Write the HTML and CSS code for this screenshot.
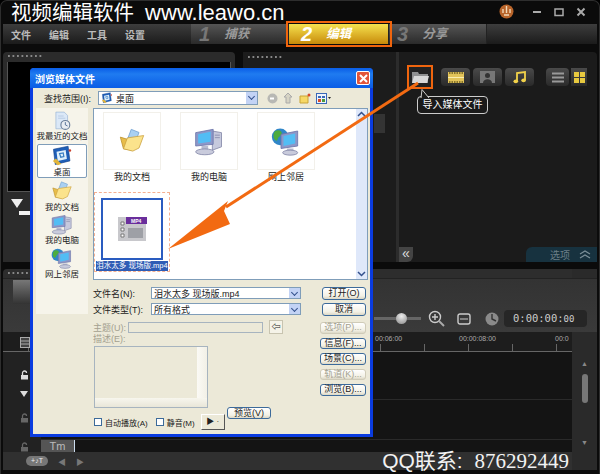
FILE: index.html
```html
<!DOCTYPE html>
<html lang="zh-CN">
<head>
  <meta charset="UTF-8" />
  <title>视频编辑软件</title>
  <link rel="stylesheet" href="styles.css">
</head>
<body>
  <svg class="defs" width="0" height="0">
    <symbol id="i-folder" viewBox="0 0 36 36">
      <path d="M17 3l10 4-6 16-10-4z" fill="#a9d0f2" stroke="#6f9fd0"/>
      <path d="M3 13l13 4 3 13-12-2z" fill="#e8bd4a" stroke="#b98f2a"/>
      <path d="M7 28l5-14 21-3-6 16-8 4z" fill="#fbe38c" stroke="#caa03c"/>
    </symbol>
    <symbol id="i-pc" viewBox="0 0 36 36">
      <path d="M22 6l11 2v17l-11 4z" fill="#c6c9dd" stroke="#8488a8"/>
      <path d="M25 11h6M25 14h6" stroke="#8488a8"/>
      <path d="M2 8l21-4v18L2 24z" fill="#8d97c8" stroke="#6b74a8"/>
      <path d="M5 10l15-3v12L5 21z" fill="#52bdf4"/>
      <path d="M9 24h8v5H9z" fill="#b8bbd0"/>
      <ellipse cx="13" cy="31" rx="11" ry="3.5" fill="#c9cbdc" stroke="#8488a8"/>
    </symbol>
    <symbol id="i-net" viewBox="0 0 36 36">
      <circle cx="11" cy="13" r="10" fill="#2f86c8"/>
      <path d="M5 6c5-2 8 0 8 3s-4 3-5 7-5 0-5-3 0-5 2-7z" fill="#4dac3e"/>
      <path d="M12 10l20-4v18l-20 3z" fill="#8d97c8" stroke="#6b74a8"/>
      <path d="M15 12l14-3v12l-14 3z" fill="#52bdf4"/>
      <path d="M19 27h8v4h-8z" fill="#b8bbd0"/>
      <ellipse cx="23" cy="32" rx="9" ry="3" fill="#c9cbdc" stroke="#8488a8"/>
    </symbol>
    <symbol id="i-recent" viewBox="0 0 36 36">
      <path d="M7 2h15l6 6v24H7z" fill="#dbe8f7" stroke="#8aa9cf"/>
      <path d="M11 9h10M11 13h13" stroke="#9db7d8"/>
      <circle cx="24" cy="25" r="8" fill="#e9edf2" stroke="#6b7f99" stroke-width="2"/>
      <path d="M24 20v5l4 2" fill="none" stroke="#3f5f8a" stroke-width="1.5"/>
    </symbol>
    <symbol id="i-desk" viewBox="0 0 36 36">
      <path d="M4 7l24-5 3 24-24 6z" fill="#1f5fb8" stroke="#123f85"/>
      <path d="M9 11l15-3 2 15-15 3z" fill="#dff0fb"/>
      <path d="M14 14l6-1 1 6-5 1z" fill="none" stroke="#3a7fc4" stroke-width="2"/>
      <path d="M3 26l8 7 6-2-9-9z" fill="#e2b53a"/>
      <circle cx="31" cy="9" r="2" fill="#c8402c"/>
    </symbol>
    <symbol id="i-lock" viewBox="0 0 10 10">
      <path d="M2.500 5V3a2 2 0 0 1 4 0" fill="none" stroke="currentColor" stroke-width="1.3"/>
      <rect x="1" y="5" width="7" height="4.500" fill="currentColor"/>
    </symbol>
  </svg>

  <div class="app">
    <header class="title-bar">
      <div class="site-title"><span class="cn">视频编辑软件</span> www.leawo.cn</div>
      <div class="win-btns">
        <svg class="win-logo" width="15" height="15" viewBox="0 0 15 15"><circle cx="7.500" cy="7.500" r="7" fill="#b8642a"/><path d="M7.500 2v7M4 5v4M11 5v4M5 11h5" stroke="#f3d9b8" stroke-width="1.400"/></svg>
        <svg width="10" height="10" viewBox="0 0 10 10"><path d="M1 5h8" stroke="#aaa" stroke-width="2"/></svg>
        <svg width="10" height="10" viewBox="0 0 10 10"><rect x="1" y="2" width="8" height="6.500" fill="none" stroke="#aaa" stroke-width="1.500"/></svg>
        <svg width="10" height="10" viewBox="0 0 10 10"><path d="M1.500 1.500l7 7M8.500 1.500l-7 7" stroke="#aaa" stroke-width="2"/></svg>
      </div>
    </header>

    <nav class="nav">
      <div class="menu">
        <span>文件</span><span>编辑</span><span>工具</span><span>设置</span>
      </div>
      <div class="tab"><b>1</b><span>捕获</span></div>
      <div class="tab tab-on"><b>2</b><span>编辑</span></div>
      <div class="tab"><b>3</b><span>分享</span></div>
      <div class="nav-rest"></div>
    </nav>

    <section class="panels">
      <div class="panel panel-left">
        <div class="dots"></div>
        <div class="screen"></div>
        <div class="scrub">
          <div class="scrub-thumb"></div>
          <div class="scrub-bar"></div>
        </div>
      </div>
      <div class="panel panel-right">
        <div class="media-left">
          <div class="dots"></div>
          <div class="media-strip"></div>
        </div>
        <div class="library">
          <div class="lib-tools">
            <div class="folder-box">
              <svg width="18" height="16" viewBox="0 0 18 16"><path d="M1 3h6l1 2h9v9H1z" fill="#8f9091"/><path d="M1 14l2-7h15l-2 7z" fill="#d8d8d8"/></svg>
            </div>
            <div class="lib-btn">
              <svg width="16" height="11" viewBox="0 0 16 11"><rect width="16" height="11" fill="#e3c45a"/><path d="M1 1h14M1 10h14" stroke="#6b5a1c" stroke-width="1.400" stroke-dasharray="1.500 1"/><path d="M0 5.500h16" stroke="#fbeeb0"/></svg>
            </div>
            <div class="lib-btn">
              <svg width="15" height="12" viewBox="0 0 15 12"><rect width="15" height="12" fill="#777"/><circle cx="7.500" cy="4.500" r="2.500" fill="#333"/><path d="M3 12c0-5 9-5 9 0z" fill="#333"/></svg>
            </div>
            <div class="lib-btn">
              <svg width="13" height="13" viewBox="0 0 13 13"><path d="M4 10V2l8-1v8" fill="none" stroke="#f2d24a" stroke-width="1.800"/><ellipse cx="2.800" cy="10.300" rx="2.300" ry="1.900" fill="#f2d24a"/><ellipse cx="10.600" cy="9.300" rx="2.300" ry="1.900" fill="#f2d24a"/></svg>
            </div>
            <div class="lib-btn view-btn">
              <svg width="12" height="11" viewBox="0 0 12 11"><path d="M0 1.500h12M0 5.500h12M0 9.500h12" stroke="#999" stroke-width="2"/></svg>
            </div>
            <div class="lib-btn view-btn view-on">
              <svg width="11" height="11" viewBox="0 0 11 11"><path d="M0 0h5v5H0zM6 0h5v5H6zM0 6h5v5H0zM6 6h5v5H6z" fill="#e7c93f"/></svg>
            </div>
          </div>
          <div class="tooltip">
            <svg class="tip-tail" width="10" height="9" viewBox="0 0 10 9"><path d="M1 9L2 .5 9 9" fill="#1a1a1a" stroke="#ccc"/></svg>
            导入媒体文件
          </div>
          <div class="lib-foot">
            <div class="collapse">«</div>
            <div class="options">
              <span>选项</span>
              <svg width="12" height="9" viewBox="0 0 12 9"><path d="M1 4l5-3 5 3M1 8l5-3 5 3" fill="none" stroke="#7b8f98" stroke-width="1.300"/></svg>
            </div>
          </div>
        </div>
      </div>
    </section>

    <section class="timeline">
      <div class="tl-main">
        <div class="dots tl-dots"></div>
        <div class="tl-tools">
          <div class="tl-thumb"></div>
          <div class="tl-right">
            <div class="slider"><div class="knob"></div></div>
            <svg class="ic-zoom" width="18" height="18" viewBox="0 0 18 18"><circle cx="7" cy="7" r="5.500" fill="none" stroke="#ccc" stroke-width="1.400"/><path d="M4 7h6M7 4v6" stroke="#ccc" stroke-width="1.400"/><path d="M11 11l5 5" stroke="#aaa" stroke-width="2"/></svg>
            <svg class="ic-fit" width="14" height="12" viewBox="0 0 14 12"><rect x="1" y="1" width="12" height="10" rx="2" fill="none" stroke="#ccc" stroke-width="1.400"/><path d="M3 6h8" stroke="#ccc"/></svg>
            <svg class="ic-clock" width="14" height="14" viewBox="0 0 14 14"><circle cx="7" cy="7" r="6.500" fill="#8a8a8a"/><path d="M7 2v5l4 2" fill="none" stroke="#333" stroke-width="1.400"/></svg>
            <div class="timecode">0:00:00:<small>00</small></div>
          </div>
        </div>
        <div class="ruler">
          <svg class="ruler-icon" width="10" height="11" viewBox="0 0 10 11"><rect x=".5" y=".5" width="9" height="10" fill="#444" stroke="#aaa"/><path d="M1 4h8M1 7h8" stroke="#aaa"/></svg>
          <span class="tick-label">00:06:00</span>
          <span class="tick-label">00:00:08:00</span>
          <span class="tick-label tick-cut">00:0</span>
        </div>
        <div class="tracks">
          <div class="track-icons">
            <svg class="lock-on" width="10" height="10"><use href="#i-lock"/></svg>
            <svg width="8" height="6" viewBox="0 0 8 6" class="lock-on"><path d="M0 0h8L4 6z" fill="#ddd"/></svg>
            <svg width="10" height="10"><use href="#i-lock"/></svg>
            <svg width="10" height="10"><use href="#i-lock"/></svg>
          </div>
          <div class="track-rows">
            <div class="track-row"></div>
            <div class="track-row"></div>
            <div class="clip-row"><div class="clip">Tm</div></div>
          </div>
        </div>
        <div class="tl-foot">
          <div class="add-btn">+♪T</div>
          <span class="nav-tri">◀</span><span class="nav-tri">▶</span>
          <div class="qq">QQ联系: <span class="qq-num">876292449</span></div>
        </div>
      </div>
      <div class="tl-scroll">
        <span>▲</span>
        <div class="scroll-thumb"></div>
        <span class="scroll-down">▼</span>
      </div>
    </section>
  </div>

  <div class="dialog">
    <div class="dlg-title">
      <span>浏览媒体文件</span>
      <div class="dlg-close">
        <svg width="9" height="9" viewBox="0 0 9 9"><path d="M1 1l7 7M8 1L1 8" stroke="#fff" stroke-width="2"/></svg>
      </div>
    </div>
    <div class="dlg-body">
      <div class="look-row">
        <label class="look-label">查找范围(I):</label>
        <div class="combo look-combo">
          <svg width="12" height="12"><use href="#i-desk"/></svg>
          <span>桌面</span>
          <div class="combo-arrow"></div>
        </div>
        <div class="look-tools">
          <svg width="11" height="11" viewBox="0 0 11 11"><circle cx="5.500" cy="5.500" r="5" fill="#b8b8b4"/><path d="M7 5.500H3" stroke="#fff" stroke-width="2"/></svg>
          <svg width="11" height="12" viewBox="0 0 11 12"><path d="M5 1l4 4H7v6H3V5H1z" fill="#d6d3c4" stroke="#aaa"/></svg>
          <svg width="12" height="11" viewBox="0 0 12 11"><path d="M1 3h8v7H1z" fill="#f6d866" stroke="#c8a438"/><circle cx="10" cy="2" r="1.500" fill="#d84a2a"/></svg>
          <svg width="15" height="11" viewBox="0 0 15 11"><rect x=".5" y=".5" width="10" height="10" fill="#eef3fb" stroke="#3a68b8"/><path d="M2 3h3v2H2zM6 3h3v2H6z" fill="#3a68b8"/><path d="M2 6h3v3H2z" fill="#d84a2a"/><path d="M6 6h3v3H6z" fill="#4a9a3a"/><path d="M12 4h3l-1.500 2z" fill="#222"/></svg>
        </div>
      </div>
      <div class="dlg-columns">
        <aside class="places">
          <div class="place place-first"><svg width="20" height="20"><use href="#i-recent"/></svg><span>我最近的文档</span></div>
          <div class="place place-on"><svg width="22" height="22"><use href="#i-desk"/></svg><span>桌面</span></div>
          <div class="place"><svg width="22" height="22"><use href="#i-folder"/></svg><span>我的文档</span></div>
          <div class="place"><svg width="22" height="22"><use href="#i-pc"/></svg><span>我的电脑</span></div>
          <div class="place"><svg width="22" height="22"><use href="#i-net"/></svg><span>网上邻居</span></div>
        </aside>
        <div class="dlg-main">
          <div class="file-list">
            <div class="files">
              <div class="file-row">
                <div class="file"><div class="thumb"><svg width="28" height="28"><use href="#i-folder"/></svg></div><span>我的文档</span></div>
                <div class="file"><div class="thumb"><svg width="30" height="30"><use href="#i-pc"/></svg></div><span>我的电脑</span></div>
                <div class="file"><div class="thumb"><svg width="30" height="30"><use href="#i-net"/></svg></div><span>网上邻居</span></div>
              </div>
              <div class="file-picked">
                <div class="thumb thumb-on">
                  <svg width="30" height="30" viewBox="0 0 30 30">
                    <path d="M1 3h28v24H1z" fill="#c8c8cc"/>
                    <path d="M4 8h3v3H4zM4 14h3v3H4zM4 20h3v3H4z" fill="#fff" stroke="#777"/>
                    <rect x="11" y="14" width="15" height="10" fill="#9ea0a6"/>
                    <rect x="9" y="3" width="21" height="7" fill="#6a2f9c"/>
                    <text x="14" y="9" class="mp4-tag">MP4</text>
                  </svg>
                </div>
                <span class="picked-name">泪水太多 现场版.mp4</span>
              </div>
            </div>
            <div class="v-scroll">
              <svg width="11" height="11" viewBox="0 0 11 11"><path d="M2 7l3.500-3.500L9 7" fill="none" stroke="#33508c" stroke-width="1.500"/></svg>
              <svg width="11" height="11" viewBox="0 0 11 11"><path d="M2 4l3.500 3.500L9 4" fill="none" stroke="#33508c" stroke-width="1.500"/></svg>
            </div>
          </div>

          <div class="field-row first-field">
            <label>文件名(N):</label>
            <div class="combo field-combo"><span>泪水太多 现场版.mp4</span><div class="combo-arrow"></div></div>
            <button class="btn btn-wide">打开(O)</button>
          </div>
          <div class="field-row second-field">
            <label>文件类型(T):</label>
            <div class="combo field-combo"><span>所有格式</span><div class="combo-arrow"></div></div>
            <button class="btn btn-wide">取消</button>
          </div>

          <div class="extras">
            <div class="extras-left">
              <div class="subject-row">
                <label class="off">主题(U):</label>
                <div class="subject-input"></div>
                <div class="back-btn">⇦</div>
              </div>
              <label class="off desc-label">描述(E):</label>
              <div class="note-row">
                <div class="note-col">
                  <div class="note">
                    <div class="note-v"></div>
                    <div class="note-h"></div>
                  </div>
                  <div class="check-row">
                    <i class="check"></i><span>自动播放(A)</span>
                    <i class="check check-2"></i><span>静音(M)</span>
                    <div class="play-btn">▶ ·</div>
                  </div>
                </div>
                <button class="btn btn-preview">预览(V)</button>
              </div>
            </div>
            <div class="extras-right">
              <button class="btn btn-side off">选项(P)...</button>
              <button class="btn btn-side">信息(F)...</button>
              <button class="btn btn-side">场景(C)...</button>
              <button class="btn btn-side off">轨道(K)...</button>
              <button class="btn btn-side">浏览(B)...</button>
            </div>
          </div>
        </div>
      </div>
    </div>
  </div>

  <svg class="arrow" width="600" height="474" viewBox="0 0 600 474">
    <path d="M418 83L226 207" stroke="#f26a12" stroke-width="3" fill="none"/>
    <path d="M168 249L228 201 224 211 230 224z" fill="#f26a12"/>
  </svg>
</body>
</html>
```

FILE: styles.css
```css
* {
  box-sizing: border-box;
}
html, body {
  margin: 0;
  height: 474px;
  overflow: hidden;
}
body {
  position: relative;
  width: 600px;
  background: #000;
  font-family: "Liberation Sans", "Noto Sans CJK SC", sans-serif;
  font-size: 9px;
  color: #222;
}
.defs {
  position: absolute;
}
.app {
  height: 474px;
  padding: 0 2px;
  background: #0b0b0b;
  border: 1px solid #2e2e2e;
  border-bottom: 0;
  border-radius: 7px 7px 0 0;
}

/* title + window buttons */
.title-bar {
  height: 23px;
  display: flex;
  justify-content: space-between;
  align-items: center;
  padding: 0 11px 0 8px;
}
.site-title {
  font-size: 22px;
  line-height: 22px;
  color: #fff;
  white-space: nowrap;
}
.site-title .cn {
  font-size: 20.500px;
  line-height: 20px;
  font-weight: 400;
  margin-right: 5px;
}
.win-btns {
  display: flex;
  align-items: center;
  gap: 12px;
  margin-top: -2px;
}
.win-logo {
  margin-right: 6px;
}

/* menu + tabs */
.nav {
  height: 20px;
  display: flex;
}
.menu {
  width: 188px;
  display: flex;
  gap: 18px;
  align-items: center;
  padding-left: 8px;
  background: linear-gradient(#3d3d3d, #1b1b1b);
  color: #bbb;
  font-size: 10px;
  font-weight: 700;
}
.tab {
  width: 98px;
  display: flex;
  align-items: center;
  gap: 14px;
  padding-left: 8px;
  background: linear-gradient(#555, #2a2a2a);
  border-right: 1px solid #222;
  color: #999;
  font-size: 12.500px;
  line-height: 16px;
  font-style: italic;
  font-weight: 700;
}
.tab b {
  font-size: 20px;
  line-height: 18px;
  color: #777;
}
.tab-on {
  width: 100px;
  padding-left: 12px;
  background: linear-gradient(#f6e24f, #c78a0a);
  color: #fff;
  outline: 2px solid #f0650e;
  outline-offset: 1px;
  position: relative;
  z-index: 1;
}
.tab-on b {
  color: #fff;
}
.nav-rest {
  flex: 1;
  background: linear-gradient(#3d3d3d, #1b1b1b);
}

/* upper panels */
.panels {
  display: flex;
  gap: 8px;
  height: 210px;
  margin-top: 8px;
}
.panel {
  background: #2b2b2b;
  border-radius: 4px 4px 0 0;
}
.dots {
  height: 9px;
  margin-left: 5px;
  background: radial-gradient(circle at 1px 4px, #888 1px, transparent 1.200px) 0 0 / 4.500px 9px repeat-x;
  width: 36px;
}
.panel-left {
  width: 232px;
}
.screen {
  height: 130px;
  margin: 1px 4px 0;
  background: #000;
  border: 1px solid #555;
  border-top: 0;
}
.scrub {
  padding: 7px 0 0 8px;
}
.scrub-thumb {
  width: 0;
  height: 0;
  border: 6px solid transparent;
  border-top: 9px solid #eee;
  border-bottom: 0;
}
.scrub-bar {
  width: 40px;
  height: 4px;
  margin: 3px 0 0 8px;
  background: #f2f2f2;
}
.panel-right {
  flex: 1;
  display: flex;
  background: #1b1b1b;
}
.media-left {
  width: 156px;
  background: #1c1c1c;
  border-right: 3px solid #2c2c2c;
  padding-top: 1px;
}
.media-strip {
  width: 11px;
  height: 19px;
  margin: 52px 0 0 131px;
  background: #343434;
}
.library {
  flex: 1;
  position: relative;
  display: flex;
  flex-direction: column;
  justify-content: space-between;
}
.lib-tools {
  display: flex;
  align-items: center;
  gap: 3px;
  padding: 13px 0 0 8px;
}
.folder-box {
  width: 26px;
  height: 24px;
  margin-right: 5px;
  display: flex;
  align-items: center;
  justify-content: center;
  border: 2px solid #f0650e;
  background: #222;
}
.lib-btn {
  width: 29px;
  height: 18px;
  display: flex;
  align-items: center;
  justify-content: center;
  border-radius: 4px;
  background: linear-gradient(#4a4a4a, #2a2a2a);
}
.view-btn {
  width: 23px;
}
.view-btn:nth-child(5) {
  margin-left: 9px;
}
.view-on {
  width: 16px;
  margin-left: -1px;
  border-radius: 0;
}
.tooltip {
  position: absolute;
  left: 18px;
  top: 44px;
  width: 71px;
  height: 18px;
  border: 1px solid #ccc;
  border-radius: 4px;
  background: #1a1a1a;
  color: #fff;
  font-size: 10px;
  line-height: 16px;
  text-align: center;
}
.tip-tail {
  position: absolute;
  left: 2px;
  top: -8px;
}
.lib-foot {
  display: flex;
  justify-content: space-between;
  align-items: flex-end;
}
.collapse {
  width: 14px;
  height: 15px;
  background: #444;
  border-radius: 0 0 6px 0;
  color: #ddd;
  font-size: 14px;
  line-height: 13px;
  text-align: center;
}
.options {
  width: 71px;
  height: 15px;
  display: flex;
  align-items: center;
  justify-content: flex-end;
  gap: 9px;
  padding-right: 6px;
  background: #17323f;
  border-radius: 6px 0 0 0;
  color: #6c7f88;
  font-size: 10px;
}

/* timeline */
.timeline {
  display: flex;
  height: 201px;
  margin-top: 7px;
  background: #2d2d2d;
  border-radius: 4px 4px 0 0;
}
.tl-main {
  width: 569px;
  display: flex;
  flex-direction: column;
}
.tl-dots {
  flex: none;
}
.tl-tools {
  height: 54px;
  flex: none;
  display: flex;
  justify-content: space-between;
  background: linear-gradient(#333, #3a3a3a);
  border-top: 1px solid #222;
  margin-right: -25px;
  position: relative;
  z-index: 1;
}
.tl-thumb {
  width: 20px;
  height: 24px;
  margin: 1px 0 0 10px;
  background: linear-gradient(#777, #333);
}
.tl-right {
  display: flex;
  align-items: center;
  padding: 31px 10px 5px 0;
}
.slider {
  position: relative;
  width: 47px;
  height: 3px;
  background: #666;
}
.knob {
  position: absolute;
  left: 22px;
  top: -4px;
  width: 11px;
  height: 11px;
  border-radius: 50%;
  background: radial-gradient(circle at 50% 30%, #eee, #888);
}
.ic-zoom {
  margin-left: 7px;
}
.ic-fit {
  margin: 0 14px 0 11px;
}
.ic-clock {
  margin-right: 5px;
}
.timecode {
  width: 83px;
  height: 17px;
  padding-left: 9px;
  border-radius: 4px;
  background: #262626;
  color: #ccc;
  font-family: "DejaVu Sans Mono", monospace;
  font-size: 10.500px;
  line-height: 17px;
}
.timecode small {
  font-size: 9px;
}
.ruler {
  height: 20px;
  flex: none;
  display: flex;
  padding-left: 17px;
  background: #1d1d1d;
  border-bottom: 1px solid #666;
  background-image: repeating-linear-gradient(90deg, #666 0 1px, transparent 1px 44px);
  background-size: 100% 7px;
  background-position: 25px bottom;
  background-repeat: no-repeat;
  overflow: hidden;
}
.ruler-icon {
  flex: none;
  margin: 5px 345px 0 0;
}
.tick-label {
  width: 84px;
  flex: none;
  color: #aaa;
  font-size: 7px;
  padding-top: 3px;
  white-space: nowrap;
}
.tick-cut {
  width: 18px;
  margin-left: 12px;
}
.tracks {
  flex: 1;
  display: flex;
  background: #141414;
}
.track-icons {
  width: 38px;
  flex: none;
  display: flex;
  flex-direction: column;
  align-items: flex-start;
  padding: 18px 0 0 17px;
  background: #222;
  color: #666;
}
.track-icons svg:nth-child(2) {
  margin-top: 11px;
}
.track-icons svg:nth-child(3) {
  margin-top: 16px;
}
.track-icons svg:nth-child(4) {
  margin-top: 19px;
}
.lock-on {
  color: #ddd;
}
.track-rows {
  flex: 1;
  display: flex;
  flex-direction: column;
}
.track-row {
  height: 48px;
  border-bottom: 1px solid #2a2a2a;
}
.track-row + .track-row {
  height: 40px;
}
.clip-row {
  flex: 1;
}
.clip {
  width: 34px;
  height: 12px;
  background: #555;
  border-right: 1px solid #cde;
  color: #bbb;
  font-size: 11px;
  line-height: 12px;
  text-align: center;
}
.tl-foot {
  height: 18px;
  flex: none;
  display: flex;
  align-items: center;
  gap: 10px;
  padding-left: 23px;
  background: #303030;
}
.add-btn {
  width: 22px;
  height: 10px;
  border-radius: 5px;
  background: #777;
  color: #eee;
  font-size: 7px;
  line-height: 10px;
  text-align: center;
}
.nav-tri {
  color: #777;
  font-size: 8px;
}
.qq {
  margin: 0 3px 0 auto;
  color: #f2f2f2;
  font-size: 21px;
  line-height: 18px;
  white-space: nowrap;
}
.qq-num {
  font-family: "Liberation Serif", serif;
  margin-left: 6px;
}
.tl-scroll {
  flex: 1;
  display: flex;
  flex-direction: column;
  align-items: center;
  padding-top: 91px;
  background: #2a2a2a;
  color: #888;
  font-size: 7px;
}
.scroll-thumb {
  width: 6px;
  height: 29px;
  margin-top: 7px;
  border-radius: 3px;
  background: #777;
}
.scroll-down {
  margin-top: 36px;
}

/* file dialog, sits over the app */
.dialog {
  position: absolute;
  z-index: 5;
  left: 30px;
  top: 68px;
  width: 343px;
  height: 369px;
  display: flex;
  flex-direction: column;
  border: 3px solid #0a3ce0;
  border-top: 0;
  border-radius: 4px 4px 0 0;
  background: #ece9d8;
}
.dlg-title {
  height: 20px;
  flex: none;
  margin: 0 -3px;
  padding: 0 3px 0 5px;
  display: flex;
  align-items: center;
  justify-content: space-between;
  border-radius: 4px 4px 0 0;
  background: linear-gradient(#0a5de6, #1f7bf0 30%, #0a5de6);
  color: #fff;
  font-size: 10px;
  font-weight: 700;
}
.dlg-close {
  width: 14px;
  height: 14px;
  display: flex;
  align-items: center;
  justify-content: center;
  border: 1px solid #fff;
  border-radius: 2px;
  background: #e2553a;
}
.dlg-body {
  flex: 1;
  padding: 3px 2px 0 3px;
}
.look-row {
  height: 14px;
  display: flex;
  align-items: center;
}
.look-label {
  width: 49px;
  margin-left: 8px;
  margin-right: 5px;
  white-space: nowrap;
}
.combo {
  display: flex;
  align-items: center;
  gap: 3px;
  border: 1px solid #7f9db9;
  background: #fff;
  padding-left: 2px;
}
.combo span {
  flex: 1;
  white-space: nowrap;
}
.look-combo {
  width: 160px;
  height: 14px;
}
.combo-arrow {
  position: relative;
  width: 11px;
  height: 100%;
  background: #c3d3f5;
}
.combo-arrow::after {
  content: "";
  position: absolute;
  left: 3px;
  top: 2px;
  width: 4px;
  height: 4px;
  border: solid #33508c;
  border-width: 0 1.500px 1.500px 0;
  transform: rotate(45deg);
}
.look-tools {
  display: flex;
  align-items: center;
  gap: 5px;
  margin-left: 9px;
}
.dlg-columns {
  display: flex;
  gap: 5px;
  margin-top: 3px;
}
.places {
  width: 52px;
  height: 206px;
  padding: 2px 1px 0;
  background: #f6f4ea;
  display: flex;
  flex-direction: column;
  align-items: stretch;
  font-size: 8.500px;
}
.place {
  height: 33.500px;
  flex: none;
  display: flex;
  flex-direction: column;
  align-items: center;
  justify-content: flex-end;
  line-height: 10px;
  white-space: nowrap;
}
.place svg {
  flex: none;
}
.place-first {
  height: 31px;
}
.place-on {
  height: 34px;
  margin-top: 3px;
  border: 1px solid #7f9db9;
  border-radius: 2px;
  background: #fff;
}
.dlg-main {
  width: 275px;
  display: flex;
  flex-direction: column;
}
.file-list {
  height: 172px;
  flex: none;
  display: flex;
  border: 1px solid #7f9db9;
  background: #fff;
}
.files {
  flex: 1;
}
.file-row {
  display: flex;
  gap: 19px;
  padding: 3px 0 0 9px;
}
.file {
  width: 58px;
  text-align: center;
  line-height: 11px;
}
.thumb {
  width: 58px;
  height: 58px;
  display: flex;
  align-items: center;
  justify-content: center;
  margin-bottom: 2px;
  border: 1px solid #f2f0ea;
}
.file-picked {
  width: 76px;
  height: 80px;
  margin-top: 9px;
  padding-top: 5px;
  border: 1px dashed #f4b090;
  display: flex;
  flex-direction: column;
  align-items: center;
}
.thumb-on {
  width: 62px;
  height: 62px;
  flex: none;
  margin: 0 0 1px;
  border: 2px solid #2a5cc0;
}
.picked-name {
  width: 72px;
  height: 10px;
  background: #2f5cb5;
  color: #fff;
  font-size: 7.500px;
  line-height: 10px;
  text-align: center;
  white-space: nowrap;
}
.mp4-tag {
  fill: #fff;
  font-size: 5px;
  font-weight: 700;
}
.v-scroll {
  width: 11px;
  display: flex;
  flex-direction: column;
  justify-content: space-between;
  background: #dfe8fa;
}
.field-row {
  height: 12px;
  flex: none;
  display: flex;
  align-items: center;
}
.field-row label {
  width: 58px;
  white-space: nowrap;
}
.first-field {
  margin-top: 7px;
}
.second-field {
  margin-top: 4px;
}
.field-combo {
  width: 150px;
  height: 12px;
}
.btn {
  padding: 0;
  border: 1px solid #3c6a9a;
  border-radius: 3px;
  background: linear-gradient(#fff, #f3f1e6 70%, #dcd8c6);
  font: inherit;
  color: #222;
  white-space: nowrap;
}
.btn-wide {
  width: 44px;
  height: 13px;
  flex: none;
  margin-left: 21px;
  line-height: 11px;
}
.extras {
  display: flex;
  margin-top: 5px;
}
.extras-left {
  width: 227px;
  flex: none;
}
.off {
  color: #a3a08f;
}
.btn.off {
  border-color: #cfcbb8;
}
.subject-row {
  height: 14px;
  display: flex;
  align-items: center;
}
.subject-row label {
  width: 35px;
  white-space: nowrap;
}
.subject-input {
  width: 135px;
  height: 11px;
  border: 1px solid #a7b4bf;
}
.back-btn {
  width: 14px;
  height: 14px;
  margin-left: 6px;
  border: 1px solid #c8c4b0;
  background: #f5f3e8;
  line-height: 12px;
  text-align: center;
  font-weight: 700;
}
.desc-label {
  display: block;
  height: 12px;
  line-height: 10px;
}
.note-row {
  display: flex;
}
.note-col {
  width: 130px;
  flex: none;
}
.note {
  position: relative;
  width: 114px;
  height: 62px;
  margin-left: 1px;
  border: 1px solid #a7b4bf;
}
.note-v {
  position: absolute;
  right: 0;
  top: 0;
  bottom: 0;
  width: 10px;
  background: linear-gradient(90deg, #fbfaf5, #f2f0e6);
}
.note-h {
  position: absolute;
  left: 0;
  right: 0;
  bottom: 0;
  height: 9px;
  background: linear-gradient(#f7f6ee, #e9e6d8);
}
.check-row {
  display: flex;
  align-items: center;
  gap: 3px;
  margin-top: 6px;
  height: 16px;
  font-size: 8px;
  white-space: nowrap;
}
.check {
  width: 8px;
  height: 8px;
  flex: none;
  margin-left: 1px;
  border: 1px solid #3c6a9a;
  background: #fff;
}
.check-2 {
  margin-left: 5px;
}
.play-btn {
  flex: none;
  width: 24px;
  height: 16px;
  margin-left: 3px;
  border: 1px solid #777;
  border-color: #fff #555 #555 #fff;
  background: #ece9d8;
  font-size: 8px;
  line-height: 14px;
  text-align: center;
}
.btn-preview {
  width: 44px;
  height: 12px;
  flex: none;
  margin: 61px 0 0 4px;
  line-height: 10px;
}
.extras-right {
  display: flex;
  flex-direction: column;
  gap: 4px;
  padding-top: 2px;
}
.btn-side {
  width: 46px;
  height: 11.500px;
  line-height: 9px;
}

/* arrow from the dialog to the import button */
.arrow {
  position: absolute;
  z-index: 6;
  left: 0;
  top: 0;
  pointer-events: none;
}
```
